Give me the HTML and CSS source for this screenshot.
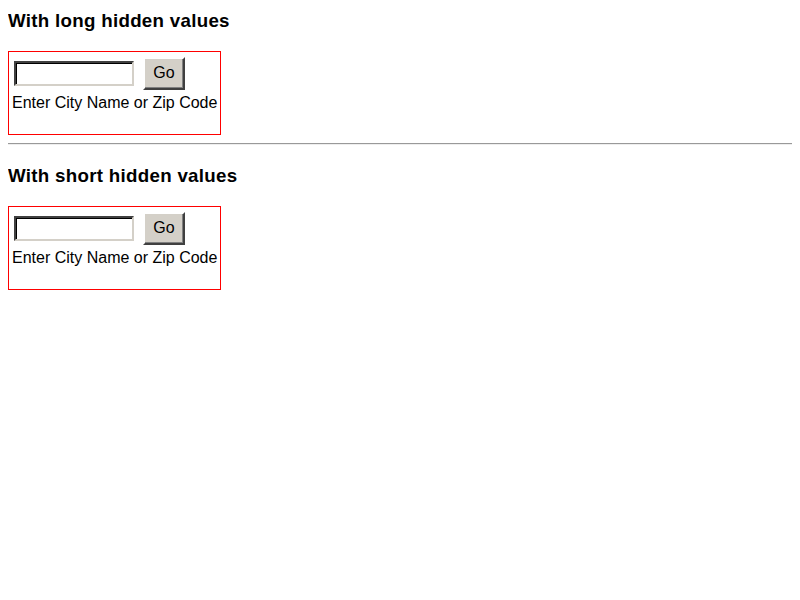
FILE: index.html
```html
<!DOCTYPE html>
<html>
<head>
<meta charset="utf-8">
<link rel="stylesheet" href="styles.css">
</head>
<body>
<h3 class="title">With long hidden values</h3>
<form class="box">
  <div class="row">
    <input class="field" type="text">
    <button class="go" type="button">Go</button>
  </div>
  <div class="hint">Enter City Name or Zip Code</div>
</form>
<hr class="rule">
<h3 class="title">With short hidden values</h3>
<form class="box">
  <div class="row">
    <input class="field" type="text">
    <button class="go" type="button">Go</button>
  </div>
  <div class="hint">Enter City Name or Zip Code</div>
</form>
</body>
</html>
```
FILE: styles.css
```css
html, body {
  background: #fff;
}
body {
  margin: 8px;
  font-family: "Liberation Sans", Arial, sans-serif;
  font-size: 16px;
  color: #000;
}
.title {
  font-size: 18.72px;
  font-weight: bold;
  letter-spacing: 0.3px;
  margin: 2px 0 19px 0;
  line-height: 22px;
}
.box {
  border: 1px solid #ff0000;
  display: inline-block;
  padding: 3px 3px 22px 3px;
  vertical-align: top;
}
.row {
  display: flex;
  align-items: center;
  height: 36px;
}
.field {
  box-sizing: border-box;
  width: 120px;
  height: 25px;
  margin: 0 0 0 2px;
  padding: 1px 2px;
  border: 2px solid;
  border-color: #404040 #d4d0c8 #d4d0c8 #404040;
  box-shadow: inset 1px 1px 0 #000;
  background: #fff;
  font-family: "Liberation Sans", Arial, sans-serif;
  font-size: 13px;
}
.go {
  box-sizing: border-box;
  width: 42px;
  height: 33px;
  margin: 0 0 0 9px;
  padding: 0;
  background: #d4d0c8;
  border: 2px solid;
  border-color: #fff #404040 #404040 #fff;
  box-shadow: inset -1px -1px 0 #808080;
  font-family: "Liberation Sans", Arial, sans-serif;
  font-size: 16px;
  color: #000;
}
.hint {
  margin-top: 3px;
  line-height: 18px;
}
.rule {
  margin: 8px 0 20px 0;
  height: 0;
  border: 0;
  border-top: 1px solid #999;
  border-bottom: 1px solid #eee;
}
```
